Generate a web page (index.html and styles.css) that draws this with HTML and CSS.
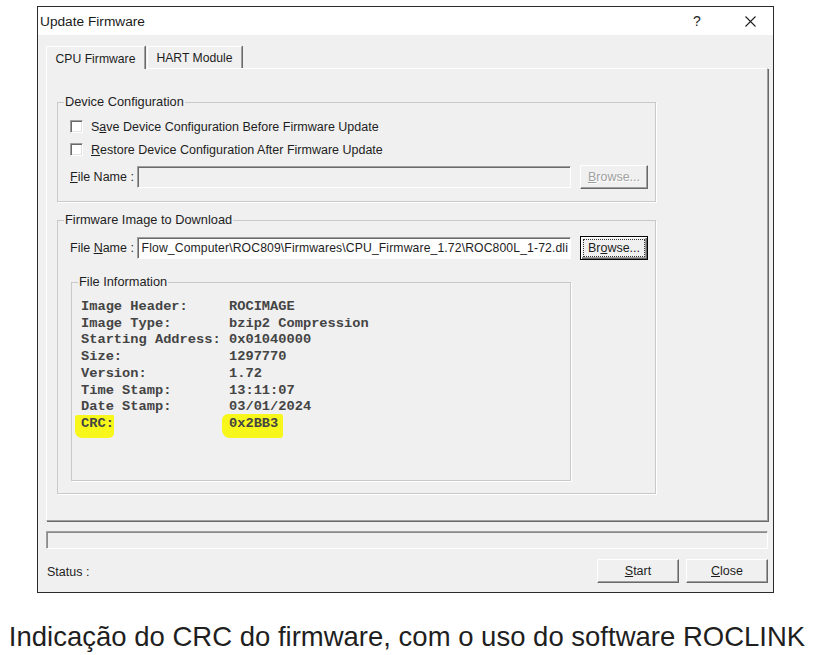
FILE: index.html
```html
<!doctype html>
<html lang="pt">
	<head>
		<meta charset="UTF-8" />
		<meta name="viewport" content="width=device-width, initial-scale=1.0" />
		<title>Update Firmware</title>
		<link rel="stylesheet" href="styles.css">
	</head>
	<body>
		<div class="window">
			<div class="titlebar">
				<span class="title">Update Firmware</span>
				<span class="caption-btn help">?</span>
				<span class="caption-btn close">
					<svg width="11" height="11" viewBox="0 0 11 11">
						<path d="M0.5 0.5 L10.5 10.5 M10.5 0.5 L0.5 10.5" stroke="#1e1e1e" stroke-width="1.1" fill="none" />
					</svg>
				</span>
			</div>

			<div class="client">
				<!-- Tabs -->
				<div class="tabs">
					<div class="tab active">CPU Firmware</div>
					<div class="tab">HART Module</div>
				</div>

				<div class="tab-page">
					<fieldset class="group device">
						<legend>Device Configuration</legend>
						<div class="group-body">
							<label class="check"><span class="box"></span><span>S<u>a</u>ve Device Configuration Before Firmware Update</span></label>
							<label class="check"><span class="box"></span><span><u>R</u>estore Device Configuration After Firmware Update</span></label>
							<div class="file-row">
								<span class="field-label"><u>F</u>ile Name :</span>
								<div class="textbox disabled"></div>
								<button class="btn browse" disabled><u>B</u>rowse...</button>
							</div>
						</div>
					</fieldset>

					<fieldset class="group firmware">
						<legend>Firmware Image to Download</legend>
						<div class="group-body">
							<div class="file-row">
								<span class="field-label">File <u>N</u>ame :</span>
								<div class="textbox"><span class="path">Flow_Computer\ROC809\Firmwares\CPU_Firmware_1.72\ROC800L_1-72.dli</span></div>
								<button class="btn browse default"><span class="focus-rect">Br<u>o</u>wse...</span></button>
							</div>

							<fieldset class="group info">
								<legend>File Information</legend>
								<div class="info-grid">
									<span>Image Header:</span><span>ROCIMAGE</span>
									<span>Image Type:</span><span>bzip2 Compression</span>
									<span>Starting Address:</span><span>0x01040000</span>
									<span>Size:</span><span>1297770</span>
									<span>Version:</span><span>1.72</span>
									<span>Time Stamp:</span><span>13:11:07</span>
									<span>Date Stamp:</span><span>03/01/2024</span>
									<span><mark class="mark mark-label">CRC:</mark></span><span><mark class="mark mark-value">0x2BB3</mark></span>
								</div>
							</fieldset>
						</div>
					</fieldset>
				</div>

				<div class="progress"></div>

				<div class="status-row">
					<span class="status">Status :</span>
					<div class="actions">
						<button class="btn action"><u>S</u>tart</button>
						<button class="btn action"><u>C</u>lose</button>
					</div>
				</div>
			</div>
		</div>

		<p class="caption-text">Indicação do CRC do firmware, com o uso do software ROCLINK</p>
	</body>
</html>
```

FILE: styles.css
```css
body {
	margin: 0;
	background-color: #fff;
	font-family: "Liberation Sans", Arial, sans-serif;
}
.window {
	width: 735px;
	margin: 6px 0 0 37px;
	border: 1px solid #2b2b2b;
	background-color: #f0f0f0;
	color: #1e1e1e;
	font-size: 12.5px;
}
.titlebar {
	display: flex;
	align-items: center;
	height: 28px;
	padding-left: 2px;
	background-color: #fff;
}
.title {
	flex: 1;
	font-size: 13.7px;
	color: #1a1a1a;
}
.caption-btn {
	display: flex;
	justify-content: center;
	align-items: center;
	height: 28px;
	font-size: 14px;
}
.help {
	width: 30px;
	margin-right: 15px;
}
.close {
	width: 46px;
}
.client {
	padding: 11px 5px 9px 8px;
}
.tabs {
	display: flex;
	height: 22px;
	position: relative;
	z-index: 1;
	font-size: 12.2px;
}
.tab {
	display: flex;
	justify-content: center;
	align-items: center;
	box-sizing: border-box;
	height: 22px;
	width: 95px;
	margin-left: 2px;
	padding-top: 1px;
	border-top: 1px solid #fff;
	border-left: 1px solid #fff;
	border-right: 1px solid #a0a0a0;
	box-shadow: 1px 0 0 #696969;
	background-color: #f0f0f0;
}
.tab.active {
	width: 99px;
	height: 23px;
	margin-left: 0;
}
.tab-page {
	border: 1px solid;
	border-color: #fff #a0a0a0 #a0a0a0 #fff;
	box-shadow: 1px 1px 0 #696969;
	padding: 26px 0 26px 10px;
}
.group {
	margin: 0;
	padding: 0;
	min-inline-size: 0;
	box-sizing: border-box;
	border: 1px solid #c9c9c9;
	box-shadow: 1px 1px 0 #fff;
}
.group legend {
	margin-left: 6px;
	padding: 0 1px;
	font-size: 12.8px;
	line-height: 14px;
}
.device,
.firmware {
	width: 599px;
}
.firmware {
	margin-top: 11px;
}
.device .group-body {
	padding: 6px 6px 12px 12px;
}
.firmware .group-body {
	padding: 9px 6px 12px 12px;
}
.check {
	display: flex;
	align-items: center;
	gap: 8px;
	height: 23px;
}
.box {
	width: 13px;
	height: 13px;
	box-sizing: border-box;
	background-color: #fff;
	border: 1px solid;
	border-color: #a0a0a0 #fff #fff #a0a0a0;
	box-shadow: inset 1px 1px 0 #696969, inset -1px -1px 0 #e3e3e3;
}
.file-row {
	display: flex;
	align-items: center;
	height: 24px;
}
.device .file-row {
	margin-top: 4px;
}
.field-label {
	width: 67px;
	flex-shrink: 0;
}
.textbox {
	display: flex;
	justify-content: flex-end;
	align-items: center;
	width: 434px;
	height: 22px;
	flex-shrink: 0;
	box-sizing: border-box;
	padding: 0 2px;
	overflow: hidden;
	white-space: nowrap;
	border: 1px solid;
	border-color: #a0a0a0 #fff #fff #a0a0a0;
	box-shadow: inset 1px 1px 0 #696969;
	background-color: #fff;
}
.textbox.disabled {
	background-color: #f0f0f0;
}
.path {
	flex-shrink: 0;
	font-size: 12.2px;
	letter-spacing: 0.12px;
}
.btn {
	display: flex;
	justify-content: center;
	align-items: center;
	box-sizing: border-box;
	height: 24px;
	padding: 0;
	border: 1px solid;
	border-color: #fff #696969 #696969 #fff;
	box-shadow: inset -1px -1px 0 #a0a0a0;
	background-color: #f0f0f0;
	font-family: inherit;
	font-size: 12.5px;
	color: #1e1e1e;
}
.browse {
	width: 68px;
	margin-left: 9px;
	flex-shrink: 0;
}
.btn:disabled {
	color: #a0a0a0;
	text-shadow: 1px 1px 0 #fff;
}
.btn.default {
	border-color: #000;
	box-shadow: inset 1px 1px 0 #fff, inset -1px -1px 0 #696969, inset -2px -2px 0 #a0a0a0;
}
.focus-rect {
	display: flex;
	justify-content: center;
	align-items: center;
	width: 60px;
	height: 16px;
	border: 1px dotted #333;
}
.info {
	width: 500px;
	margin: 15px 0 0 1px;
}
.info-grid {
	display: grid;
	grid-template-columns: 148px auto;
	padding: 10px 9px 47px;
	font-family: "Liberation Mono", "Courier New", monospace;
	font-weight: bold;
	font-size: 13.7px;
	line-height: 16.7px;
	color: #444;
}
.mark {
	display: inline-block;
	background-color: #f7f71c;
	color: #444;
	line-height: 16.7px;
}
.mark-label {
	padding: 1px 0 5px 6px;
	margin: -1px 0 -5px -6px;
	border-radius: 2px 1px 5px 7px;
}
.mark-value {
	padding: 2px 5px 5px 7px;
	margin: -2px -5px -5px -7px;
	border-radius: 6px 2px 3px 8px;
}
.progress {
	height: 18px;
	margin-top: 10px;
	box-sizing: border-box;
	border: 1px solid;
	border-color: #a0a0a0 #fff #fff #a0a0a0;
	box-shadow: inset 1px 1px 0 #8a8a8a;
}
.status-row {
	display: flex;
	align-items: center;
	margin-top: 10px;
}
.status {
	flex: 1;
	padding: 2px 0 0 1px;
}
.actions {
	display: flex;
	gap: 7px;
}
.action {
	width: 82px;
}
.caption-text {
	margin: 28px 0 0;
	font-size: 27.5px;
	line-height: 32px;
	text-align: center;
	color: #1f1f1f;
}
```
